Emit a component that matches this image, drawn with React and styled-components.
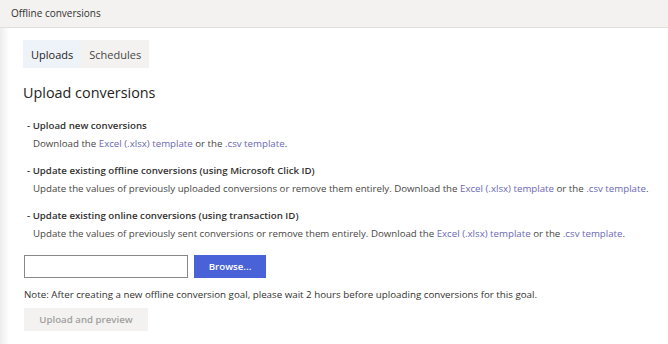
import React from "react";
import styled, { createGlobalStyle } from "styled-components";

const GlobalStyle = createGlobalStyle`
  html, body {
    margin: 0;
    padding: 0;
    background: #ffffff;
  }
  body {
    font-family: "Open Sans", "Noto Sans", sans-serif;
    color: #323130;
  }
`;

const items = [
  {
    title: "Upload new conversions",
    text: "Download the ",
  },
  {
    title: "Update existing offline conversions (using Microsoft Click ID)",
    text: "Update the values of previously uploaded conversions or remove them entirely. Download the ",
  },
  {
    title: "Update existing online conversions (using transaction ID)",
    text: "Update the values of previously sent conversions or remove them entirely. Download the ",
  },
];

const App = () => {
  return (
    <Page>
      <GlobalStyle />
      <Header>Offline conversions</Header>
      <Content>
        <Tabs>
          <Tab active>Uploads</Tab>
          <Tab>Schedules</Tab>
        </Tabs>
        <Heading>Upload conversions</Heading>
        <List>
          {items.map((item) => (
            <Item key={item.title}>
              <ItemTitle>- {item.title}</ItemTitle>
              <ItemText>
                {item.text}
                <LinkText>Excel (.xlsx) template</LinkText> or the{" "}
                <LinkText>.csv template</LinkText>.
              </ItemText>
            </Item>
          ))}
        </List>
        <FileRow>
          <FileInput />
          <BrowseButton>Browse...</BrowseButton>
        </FileRow>
        <Note>
          Note: After creating a new offline conversion goal, please wait 2 hours
          before uploading conversions for this goal.
        </Note>
        <UploadButton disabled>Upload and preview</UploadButton>
      </Content>
    </Page>
  );
};

const Page = styled.div`
  width: 668px;
  height: 344px;
  overflow: hidden;
  background: linear-gradient(to right, #ececec 0px, #f7f7f7 5px, #ffffff 10px);
`;

const Header = styled.div`
  height: 28px;
  box-sizing: border-box;
  padding: 6px 0 0 11px;
  background: #f3f2f1;
  border-bottom: 1px solid #e1dfdd;
  font-size: 10px;
  color: #323130;
`;

const Content = styled.div`
  padding: 12px 0 0 23px;
`;

const Tabs = styled.div`
  display: inline-flex;
  height: 28px;
`;

const Tab = styled.div`
  display: flex;
  align-items: center;
  padding: 0 8px;
  font-size: 11px;
  background: ${(p) => (p.active ? "#eef2f9" : "#f3f2f1")};
  color: ${(p) => (p.active ? "#252423" : "#484644")};
`;

const Heading = styled.h2`
  margin: 14px 0 0 0;
  font-size: 14.4px;
  font-weight: 400;
  color: #252423;
  line-height: 22px;
`;

const List = styled.div`
  margin-top: 15px;
  display: flex;
  flex-direction: column;
  gap: 13px;
`;

const Item = styled.div`
  display: flex;
  flex-direction: column;
  gap: 4px;
`;

const ItemTitle = styled.div`
  font-size: 9.7px;
  font-weight: 600;
  line-height: 14px;
  padding-left: 4px;
  color: #323130;
`;

const ItemText = styled.div`
  font-size: 9.7px;
  line-height: 14px;
  padding-left: 10px;
  color: #484644;
`;

const LinkText = styled.span`
  color: #6b69b5;
  cursor: pointer;
`;

const FileRow = styled.div`
  display: flex;
  gap: 6px;
  margin-top: 14px;
  padding-left: 1px;
`;

const FileInput = styled.div`
  width: 164px;
  height: 23px;
  box-sizing: border-box;
  border: 1px solid #8a8886;
  background: #fff;
`;

const BrowseButton = styled.button`
  width: 72px;
  height: 23px;
  border: none;
  background: #4a62d8;
  color: #fff;
  font-family: inherit;
  font-size: 9.7px;
  font-weight: 600;
  padding: 0;
`;

const Note = styled.div`
  margin-top: 10px;
  font-size: 9.75px;
  line-height: 14px;
  padding-left: 1px;
  color: #323130;
`;

const UploadButton = styled.button`
  display: block;
  margin-top: 6px;
  margin-left: 1px;
  width: 124px;
  height: 23px;
  border: none;
  background: #f3f2f1;
  color: #a19f9d;
  font-family: inherit;
  font-size: 9.7px;
  font-weight: 600;
  padding: 0;
`;

export default App;
